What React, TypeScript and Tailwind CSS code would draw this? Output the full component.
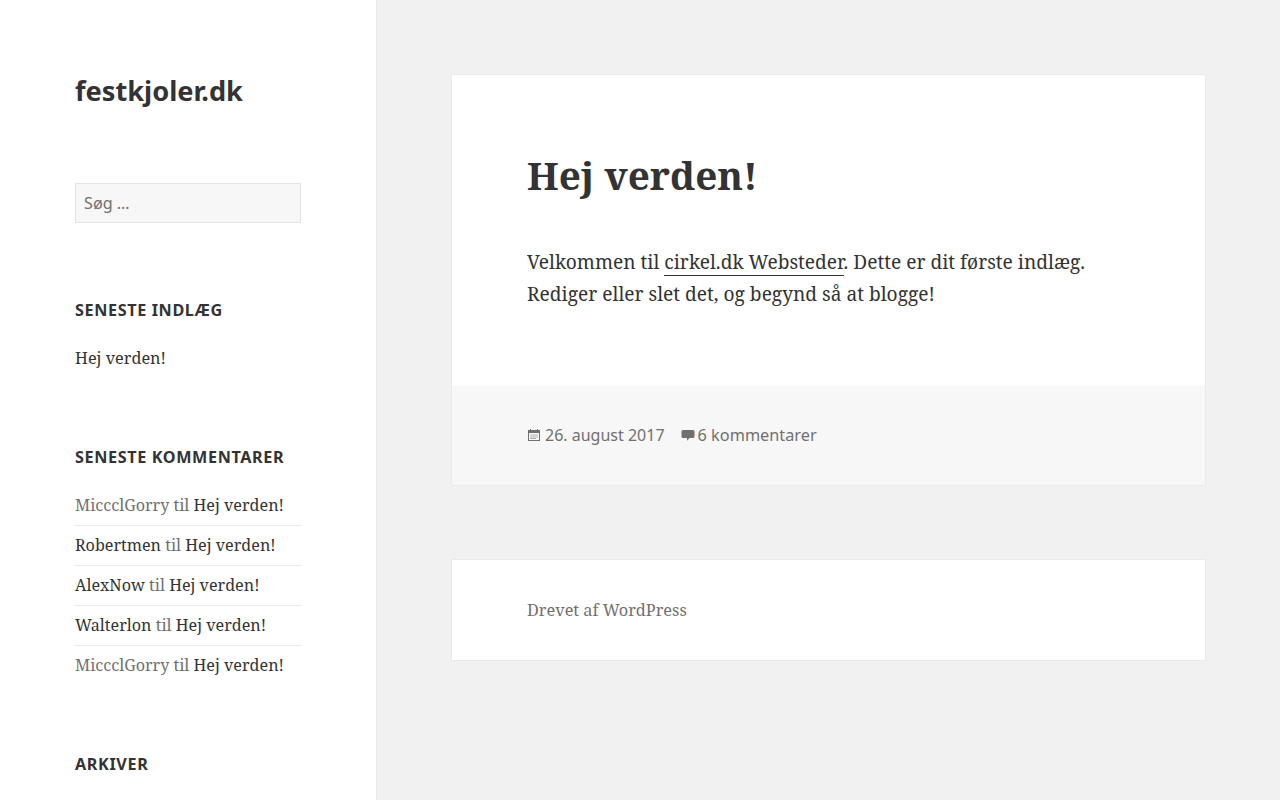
const sans = "font-['Noto_Sans','Open_Sans',sans-serif]";
const serif = "font-['Noto_Serif','Liberation_Serif',serif]";

const comments = [
  { author: "MiccclGorry", link: false },
  { author: "Robertmen", link: true },
  { author: "AlexNow", link: true },
  { author: "Walterlon", link: true },
  { author: "MiccclGorry", link: false },
];

function WidgetTitle({ children }: { children: string }) {
  return (
    <h2 className={`${sans} text-[16.2px] leading-[24px] font-bold uppercase tracking-[0.62px] text-[#333]`}>
      {children}
    </h2>
  );
}

function CalendarIcon() {
  return (
    <svg viewBox="0 0 14 14" className="mr-[4px] size-[14px] shrink-0" fill="currentColor">
      <path d="M3 1h1v1h6V1h1v1h2v11H1V2h2zM2 5v7h10V5z" fillRule="evenodd" />
      <path d="M3.5 6.5h1v1h-1zM5.5 6.5h1v1h-1zM7.5 6.5h1v1h-1zM9.5 6.5h1v1h-1zM3.5 8.5h1v1h-1zM5.5 8.5h1v1h-1zM7.5 8.5h1v1h-1zM9.5 8.5h1v1h-1zM3.5 10h1v1h-1zM5.5 10h1v1h-1zM7.5 10h1v1h-1z" />
    </svg>
  );
}

function CommentIcon() {
  return (
    <svg viewBox="0 0 14 14" className="ml-[16px] mr-[3px] size-[14px] shrink-0" fill="currentColor">
      <path d="M2 2h10A1.5 1.5 0 0 1 13.5 3.5v5A1.5 1.5 0 0 1 12 10H8.5L6 12.8V10H2A1.5 1.5 0 0 1 .5 8.5v-5A1.5 1.5 0 0 1 2 2z" />
    </svg>
  );
}

export default function App() {
  return (
    <div className="flex h-screen overflow-hidden bg-[#f1f1f1]">
      <aside className="w-[377px] shrink-0 border-r border-[#e8e8e8] bg-white pl-[75px] pr-[75px] pt-[74px]">
        <h1 className={`${sans} text-[27.2px] leading-[34px] font-bold text-[#333]`}>festkjoler.dk</h1>

        <div
          className={`${sans} mt-[75px] flex h-[40px] w-[226px] items-center border border-[#e3e3e3] bg-[#f7f7f7] pl-2 text-[16.2px] text-[#707070]`}
        >
          Søg …
        </div>

        <section className="mt-[75px]">
          <WidgetTitle>Seneste indlæg</WidgetTitle>
          <p className={`${serif} mt-[24px] text-[16.25px] leading-[24px] text-[#333]`}>Hej verden!</p>
        </section>

        <section className="mt-[75px]">
          <WidgetTitle>Seneste kommentarer</WidgetTitle>
          <ul className={`${serif} mt-[17px] w-[226px] text-[16.15px] leading-[24px]`}>
            {comments.map((c, i) => (
              <li key={i} className="border-b border-[#eaeaea] pt-[7px] pb-[8px] last:border-b-0 whitespace-nowrap">
                <span className={c.link ? "text-[#333]" : "text-[#707070]"}>{c.author}</span>
                <span className="text-[#707070]"> til </span>
                <span className="text-[#333]">Hej verden!</span>
              </li>
            ))}
          </ul>
        </section>

        <section className="mt-[67px]">
          <WidgetTitle>Arkiver</WidgetTitle>
        </section>
      </aside>

      <main className="flex-1 pl-[74px] pt-[74px]">
        <article className="w-[755px] border border-[#eaeaea] bg-white">
          <div className="px-[75px] pt-[75px] pb-[76px]">
            <h1 className={`${serif} text-[38.7px] leading-[50px] font-bold text-[#333]`}>Hej verden!</h1>
            <p className={`${serif} mt-[46px] text-[19.15px] leading-[32px] text-[#333]`}>
              Velkommen til{" "}
              <span className="border-b border-[#333]">cirkel.dk Websteder</span>. Dette er dit første indlæg.
              <br />
              Rediger eller slet det, og begynd så at blogge!
            </p>
          </div>
          <div className={`${sans} flex items-center bg-[#f7f7f7] px-[75px] pt-[37px] pb-[38px] leading-[24px] text-[#707070]`}>
            <CalendarIcon />
            <span className="text-[16px]">26. august 2017</span>
            <CommentIcon />
            <span className="text-[16.3px]">6 kommentarer</span>
          </div>
        </article>

        <footer className="mt-[73px] w-[755px] border border-[#eaeaea] bg-white px-[75px] py-[38px]">
          <p className={`${serif} text-[16.3px] leading-[24px] text-[#707070]`}>Drevet af WordPress</p>
        </footer>
      </main>
    </div>
  );
}
